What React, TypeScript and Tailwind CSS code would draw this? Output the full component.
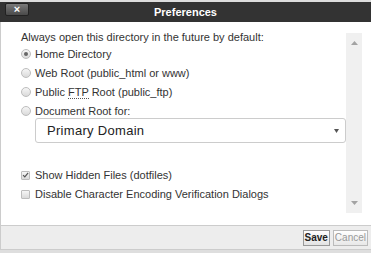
const Radio = ({ checked }: { checked?: boolean }) => (
  <span className="w-[10px] h-[10px] rounded-full border border-[#bdbdbd] bg-gradient-to-b from-[#f6f6f6] to-[#dadada] flex items-center justify-center shrink-0">
    {checked && <span className="w-[4px] h-[4px] rounded-full bg-[#666]" />}
  </span>
);

const Check = ({ checked }: { checked?: boolean }) => (
  <span className="w-[9px] h-[9px] rounded-[1px] border border-[#bdbdbd] bg-gradient-to-b from-[#f6f6f6] to-[#dadada] flex items-center justify-center shrink-0">
    {checked && (
      <svg width="8" height="8" viewBox="0 0 8 8">
        <path d="M1.2 4.2 L3.2 6.2 L7 1.5" stroke="#555" strokeWidth="1.4" fill="none" />
      </svg>
    )}
  </span>
);

const App = () => {
  const options = [
    { label: "Home Directory", checked: true },
    { label: "Web Root (public_html or www)" },
    { label: "ftp" },
    { label: "Document Root for:" },
  ];

  return (
    <div className="w-[371px] h-[253px] bg-[#dedede] pt-[2px] font-['Liberation_Sans',Arial,sans-serif] text-[#333] overflow-hidden">
      {/* title bar */}
      <div className="relative h-[20px] bg-[#333] flex items-center justify-center">
        <div className="absolute left-[5px] top-[1px] w-[24px] h-[13px] rounded-[2px] bg-gradient-to-b from-[#7a7a7a] to-[#4a4a4a] border border-[#222] flex items-center justify-center">
          <span className="text-white text-[11px] font-bold leading-none">×</span>
        </div>
        <span className="text-white text-[11px] font-bold">Preferences</span>
      </div>

      {/* body */}
      <div className="h-[203px] bg-white border-l border-[#ccc] flex">
        <div className="flex-1 pt-[8px] pl-[20px] text-[11px]">
          <div className="leading-[14px]">Always open this directory in the future by default:</div>
          <div className="flex flex-col mt-[3px] gap-[5px]">
            {options.map((o) => (
              <div key={o.label} className="flex items-center h-[14px]">
                <Radio checked={o.checked} />
                <span className="ml-[4px]">
                  {o.label === "ftp" ? (
                    <>
                      Public{" "}
                      <abbr className="no-underline border-b border-dotted border-[#555]">FTP</abbr>{" "}
                      Root (public_ftp)
                    </>
                  ) : (
                    o.label
                  )}
                </span>
              </div>
            ))}
          </div>
          <div className="ml-[14px] mt-[0px] w-[311px] h-[25px] rounded-[3px] border border-[#ccc] flex items-center justify-between pl-[11px] pr-[6px]">
            <span className="text-[13px] text-[#222] tracking-[0.3px]">Primary Domain</span>
            <svg width="5" height="4" viewBox="0 0 5 4">
              <path d="M0 0 H5 L2.5 4 Z" fill="#555" />
            </svg>
          </div>
          <div className="flex flex-col mt-[25px] gap-[5px]">
            <div className="flex items-center h-[14px]">
              <Check checked />
              <span className="ml-[5px]">Show Hidden Files (dotfiles)</span>
            </div>
            <div className="flex items-center h-[14px]">
              <Check />
              <span className="ml-[5px]">Disable Character Encoding Verification Dialogs</span>
            </div>
          </div>
        </div>

        {/* scrollbar */}
        <div className="w-[16px] mt-[11px] mb-[12px] mr-[9px] bg-[#f0f0f0] flex flex-col items-center justify-between py-[8px]">
          <svg width="7" height="4" viewBox="0 0 7 4">
            <path d="M0 4 H7 L3.5 0 Z" fill="#a3a3a3" />
          </svg>
          <svg width="7" height="4" viewBox="0 0 7 4">
            <path d="M0 0 H7 L3.5 4 Z" fill="#a3a3a3" />
          </svg>
        </div>
      </div>

      {/* footer */}
      <div className="h-[25px] bg-[#ededed] border-t border-b border-l border-[#ccc] flex items-center justify-end gap-[3px] pr-[3px]">
        <button className="h-[16px] px-[1px] border border-[#999] bg-gradient-to-b from-[#fff] to-[#e3e3e3] text-[10px] font-bold text-[#222] leading-none">
          Save
        </button>
        <button className="h-[16px] px-[1px] border border-[#bbb] bg-gradient-to-b from-[#fff] to-[#e8e8e8] text-[10px] text-[#999] leading-none">
          Cancel
        </button>
      </div>
    </div>
  );
};

export default App;
